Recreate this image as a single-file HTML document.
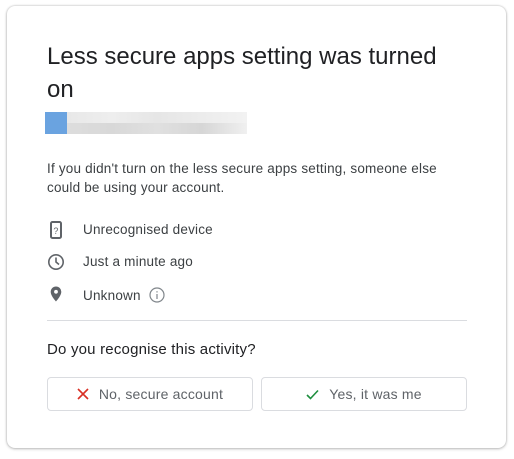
<!DOCTYPE html>
<html><head><style>
body{margin:0;width:514px;height:459px;background:#fff;font-family:"Liberation Sans",Arial,sans-serif;position:relative;overflow:hidden}
.card{position:absolute;left:7px;top:6px;width:499px;height:442px;border-radius:8px;box-shadow:0 0 2px rgba(0,0,0,.25),0 1px 3px rgba(0,0,0,.2);background:#fff}
.t{position:absolute;left:47px;top:40px;font-size:24px;line-height:33px;color:#202124;width:420px}
.p{position:absolute;left:47px;top:159px;font-size:13.5px;line-height:19px;color:#3c4043;width:405px;letter-spacing:0.2px}
.row{position:absolute;left:47px;font-size:13.5px;color:#3c4043;height:20px;line-height:20px;letter-spacing:0.2px}
.row span{position:absolute;left:36px;white-space:nowrap}
.row svg{position:absolute;left:0;top:1px}
.hr{position:absolute;left:47px;top:320px;width:420px;height:1px;background:#dadce0}
.q{position:absolute;left:47px;top:341px;font-size:15px;color:#202124;letter-spacing:0.2px}
.btn{position:absolute;top:377px;height:34px;border:1px solid #dadce0;border-radius:4px;font-size:14px;color:#5f6368;display:flex;align-items:center;justify-content:center;gap:10px;box-sizing:border-box;letter-spacing:0.2px}
</style></head><body>
<div class="card"></div>
<div class="t">Less secure apps setting was turned on</div>
<div style="position:absolute;left:45px;top:112px;width:22px;height:22px;background:#6aa3e0"></div>
<div style="position:absolute;left:67px;top:112px;width:180px;height:11px;background:linear-gradient(90deg,#e8e8e8,#eee,#e6e6e6,#ececec,#f2f2f2)"></div>
<div style="position:absolute;left:67px;top:123px;width:180px;height:11px;background:linear-gradient(90deg,#ddd,#d8d8d8,#e0e0e0,#d6d6d6,#f0f0f0)"></div>
<div class="p">If you didn't turn on the less secure apps setting, someone else could be using your account.</div>
<div class="row" style="top:220px"><svg width="18" height="18" viewBox="0 0 18 18"><rect x="4" y="1" width="10" height="16" rx="1.5" fill="none" stroke="#5f6368" stroke-width="2"/><text x="9" y="13" font-size="9" text-anchor="middle" fill="#5f6368" font-family="Liberation Sans">?</text></svg><span>Unrecognised device</span></div>
<div class="row" style="top:252px"><svg width="18" height="18" viewBox="0 0 18 18"><circle cx="9" cy="9" r="7.2" fill="none" stroke="#5f6368" stroke-width="1.6"/><path d="M9 4.5V9l3 2.5" fill="none" stroke="#5f6368" stroke-width="1.6"/></svg><span>Just a minute ago</span></div>
<div class="row" style="top:284px"><svg width="18" height="18" viewBox="0 0 18 18"><path d="M9 1.5a5.3 5.3 0 0 0-5.3 5.3C3.7 11 9 16.5 9 16.5s5.3-5.5 5.3-9.7A5.3 5.3 0 0 0 9 1.5z" fill="#5f6368"/><circle cx="9" cy="6.8" r="1.9" fill="#fff"/></svg><span>Unknown <svg style="position:relative;left:4px;top:3px" width="16" height="16" viewBox="0 0 16 16"><circle cx="8" cy="8" r="7" fill="none" stroke="#80868b" stroke-width="1.2"/><rect x="7.4" y="7" width="1.2" height="5" fill="#80868b"/><rect x="7.4" y="4.2" width="1.2" height="1.3" fill="#80868b"/></svg></span></div>
<div class="hr"></div>
<div class="q">Do you recognise this activity?</div>
<div class="btn" style="left:47px;width:206px"><svg width="12" height="12" viewBox="0 0 12 12"><path d="M1 1l10 10M11 1L1 11" stroke="#d93025" stroke-width="1.6"/></svg>No, secure account</div>
<div class="btn" style="left:261px;width:206px"><svg width="13" height="11" viewBox="0 0 13 11"><path d="M1 6l3.5 3.5L12 1.5" fill="none" stroke="#1e8e3e" stroke-width="1.6"/></svg>Yes, it was me</div>
</body></html>
